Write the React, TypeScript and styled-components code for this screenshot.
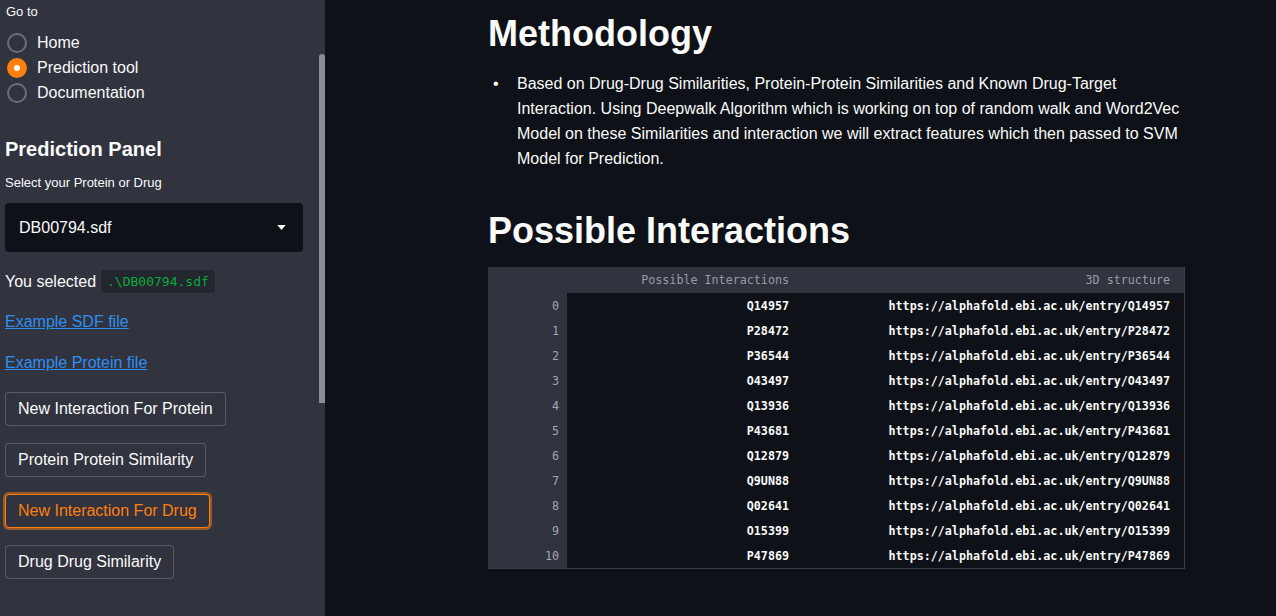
import React from 'react';
import styled, { createGlobalStyle } from 'styled-components';

const GlobalStyle = createGlobalStyle`
  html, body {
    margin: 0;
    padding: 0;
    background: #0e1117;
    color: #fafafa;
    font-family: "Liberation Sans", Arial, sans-serif;
    overflow: hidden;
  }
`;

const ORANGE = '#ff7f0e';

const rows = [
  'Q14957',
  'P28472',
  'P36544',
  'O43497',
  'Q13936',
  'P43681',
  'Q12879',
  'Q9UN88',
  'Q02641',
  'O15399',
  'P47869',
];

const App = () => {
  return (
    <>
      <GlobalStyle />
      <Page>
        <Sidebar>
          <SmallLabel>Go to</SmallLabel>
          <RadioGroup>
            {['Home', 'Prediction tool', 'Documentation'].map((item) => (
              <RadioRow key={item}>
                <RadioDot $checked={item === 'Prediction tool'} />
                {item}
              </RadioRow>
            ))}
          </RadioGroup>
          <PanelTitle>Prediction Panel</PanelTitle>
          <SelectLabel>Select your Protein or Drug</SelectLabel>
          <SelectBox>
            DB00794.sdf
            <Caret viewBox="0 0 10 6">
              <path d="M0 0h10L5 6z" fill="#fafafa" />
            </Caret>
          </SelectBox>
          <SelectedRow>
            You selected <Code>.\DB00794.sdf</Code>
          </SelectedRow>
          <Link href="#" $top={19}>
            Example SDF file
          </Link>
          <Link href="#" $top={21}>
            Example Protein file
          </Link>
          <Button $top={19}>New Interaction For Protein</Button>
          <Button $top={17}>Protein Protein Similarity</Button>
          <Button $top={17} $focused>
            New Interaction For Drug
          </Button>
          <Button $top={17}>Drug Drug Similarity</Button>
          <ScrollThumb />
        </Sidebar>
        <Main>
          <Content>
            <Heading>Methodology</Heading>
            <List>
              <li>
                Based on Drug-Drug Similarities, Protein-Protein Similarities and
                Known Drug-Target Interaction. Using Deepwalk Algorithm which is
                working on top of random walk and Word2Vec Model on these
                Similarities and interaction we will extract features which then
                passed to SVM Model for Prediction.
              </li>
            </List>
            <Heading $top={38}>Possible Interactions</Heading>
            <Table>
              <thead>
                <tr>
                  <HeadCell $index></HeadCell>
                  <HeadCell>Possible Interactions</HeadCell>
                  <HeadCell $last>3D structure</HeadCell>
                </tr>
              </thead>
              <tbody>
                {rows.map((id, i) => (
                  <tr key={id}>
                    <IndexCell>{i}</IndexCell>
                    <DataCell>{id}</DataCell>
                    <DataCell $last>
                      https://alphafold.ebi.ac.uk/entry/{id}
                    </DataCell>
                  </tr>
                ))}
              </tbody>
            </Table>
          </Content>
        </Main>
      </Page>
    </>
  );
};

const Page = styled.div`
  display: flex;
  width: 100vw;
  height: 100vh;
`;

const Sidebar = styled.aside`
  position: relative;
  width: 325px;
  flex-shrink: 0;
  box-sizing: border-box;
  padding: 3px 0 0 5px;
  background: #31333f;
  display: flex;
  flex-direction: column;
  align-items: flex-start;
`;

const SmallLabel = styled.div`
  font-size: 13px;
  line-height: 18px;
  padding-left: 1px;
`;

const RadioGroup = styled.div`
  margin-top: 9px;
  display: flex;
  flex-direction: column;
`;

const RadioRow = styled.label`
  display: flex;
  align-items: center;
  gap: 10px;
  height: 25px;
  font-size: 16px;
  padding-left: 2px;
`;

const RadioDot = styled.span<{ $checked?: boolean }>`
  width: 20px;
  height: 20px;
  box-sizing: border-box;
  border-radius: 50%;
  border: 2px solid ${(p) => (p.$checked ? ORANGE : '#6d6e76')};
  background: ${(p) => (p.$checked ? ORANGE : 'transparent')};
  display: flex;
  align-items: center;
  justify-content: center;
  &::after {
    content: '';
    display: ${(p) => (p.$checked ? 'block' : 'none')};
    width: 6px;
    height: 6px;
    border-radius: 50%;
    background: #fff;
  }
`;

const PanelTitle = styled.div`
  margin-top: 32px;
  font-size: 20px;
  font-weight: 700;
  line-height: 24px;
`;

const SelectLabel = styled.div`
  margin-top: 14px;
  font-size: 13px;
  line-height: 16px;
`;

const SelectBox = styled.div`
  margin-top: 12px;
  width: 298px;
  height: 49px;
  box-sizing: border-box;
  padding: 0 14px;
  border-radius: 4px;
  background: #0e1117;
  display: flex;
  align-items: center;
  justify-content: space-between;
  font-size: 16px;
`;

const Caret = styled.svg`
  width: 9px;
  height: 5px;
  margin-right: 3px;
`;

const SelectedRow = styled.div`
  margin-top: 18px;
  height: 23px;
  display: flex;
  align-items: center;
  gap: 5px;
  font-size: 16px;
`;

const Code = styled.code`
  height: 23px;
  display: flex;
  align-items: center;
  padding: 0 6px;
  border-radius: 4px;
  background: #24262e;
  color: #09ab3b;
  font-family: "DejaVu Sans Mono", "Liberation Mono", monospace;
  font-size: 13px;
`;

const Link = styled.a<{ $top: number }>`
  margin-top: ${(p) => p.$top}px;
  font-size: 16px;
  line-height: 20px;
  color: #2f8ff0;
  text-decoration: underline;
`;

const Button = styled.button<{ $top: number; $focused?: boolean }>`
  margin-top: ${(p) => p.$top}px;
  height: 34px;
  padding: 0 12px;
  border-radius: 4px;
  border: 1px solid ${(p) => (p.$focused ? ORANGE : 'rgba(250, 250, 250, 0.2)')};
  box-shadow: ${(p) => (p.$focused ? 'rgba(255, 127, 14, 0.5) 0 0 0 2px' : 'none')};
  background: #31333f;
  color: ${(p) => (p.$focused ? ORANGE : '#fafafa')};
  font-family: "Liberation Sans", Arial, sans-serif;
  font-size: 16px;
`;

const ScrollThumb = styled.div`
  position: absolute;
  top: 54px;
  right: 0;
  width: 6px;
  height: 349px;
  border-radius: 3px 3px 0 0;
  background: #8b8c94;
`;

const Main = styled.main`
  flex: 1;
  background: #0e1117;
  padding-top: 12px;
`;

const Content = styled.div`
  margin-left: 163px;
  width: 697px;
`;

const Heading = styled.h1<{ $top?: number }>`
  margin: ${(p) => p.$top ?? 0}px 0 0;
  font-size: 36px;
  font-weight: 700;
  line-height: 43px;
`;

const List = styled.ul`
  margin: 16px 0 0;
  padding-left: 29px;
  list-style: none;
  font-size: 16px;
  line-height: 25px;
  li::before {
    content: '•';
    display: inline-block;
    width: 24px;
    margin-left: -24px;
  }
`;

const Table = styled.table`
  margin-top: 15px;
  width: 697px;
  border-collapse: collapse;
  font-family: "DejaVu Sans Mono", "Liberation Mono", monospace;
  font-size: 11.7px;
  border-right: 1px solid #3a3c46;
  border-bottom: 1px solid #3a3c46;
`;

const HeadCell = styled.th<{ $index?: boolean; $last?: boolean }>`
  height: 26px;
  padding: 0 ${(p) => (p.$last ? 14 : 8)}px 0 8px;
  width: ${(p) => (p.$index ? '63px' : p.$last ? 'auto' : '214px')};
  background: #31333f;
  color: #9a9ca4;
  font-weight: 400;
  text-align: right;
`;

const IndexCell = styled.td`
  height: 25px;
  padding: 0 8px;
  background: #31333f;
  color: #a3a5ad;
  text-align: right;
`;

const DataCell = styled.td<{ $last?: boolean }>`
  height: 25px;
  padding: 0 ${(p) => (p.$last ? 14 : 8)}px 0 8px;
  color: #fafafa;
  font-weight: 700;
  text-align: right;
`;

export default App;
